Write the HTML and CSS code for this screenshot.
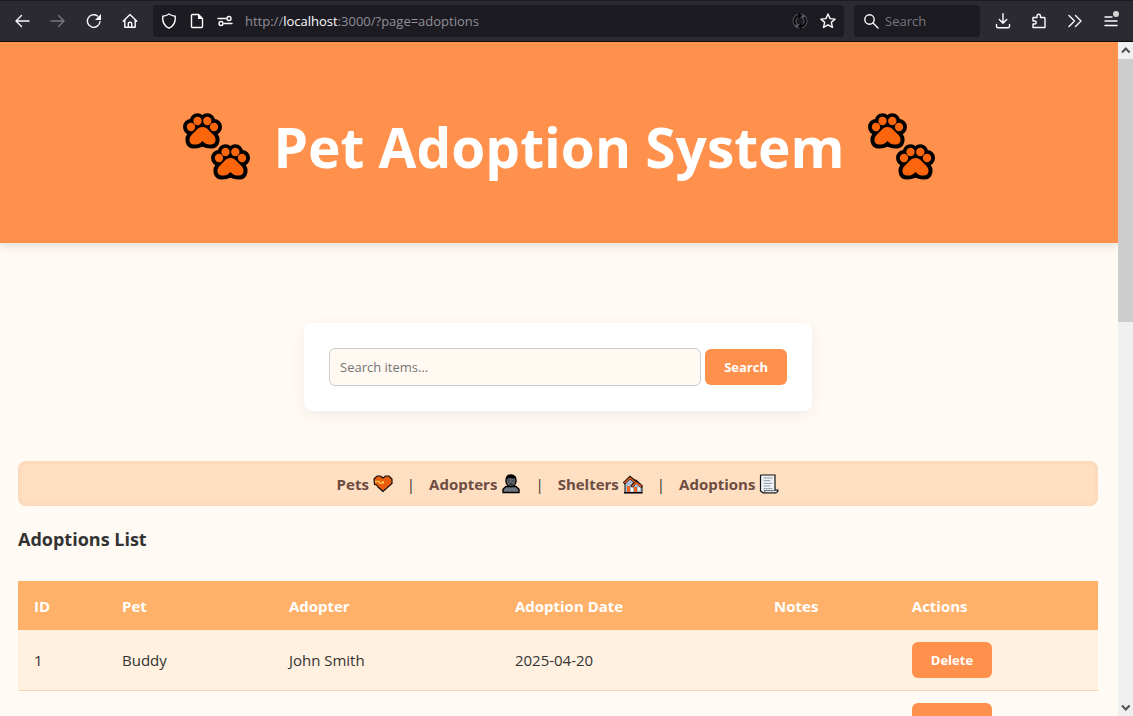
FILE: index.html
```
<!DOCTYPE html>
<html lang="en">
<head>
<meta charset="utf-8">
<title>Pet Adoption System</title>
<link rel="stylesheet" href="styles.css">
</head>
<body>
<svg class="defs" aria-hidden="true">
  <symbol id="paw" viewBox="0 0 39 36">
    <g fill="#000" stroke="#000" stroke-width="8" stroke-linejoin="round">
      <circle cx="14.5" cy="8" r="3.8"/><circle cx="24.3" cy="8" r="3.8"/>
      <circle cx="8" cy="14" r="4"/><circle cx="31" cy="14" r="4"/>
      <path d="M19.500 14C14.500 14 12 19 8.500 22C5 25.500 6 31.500 11 31.500C14.500 31.500 17 31 19.500 28.500C22 31 24.500 31.500 28 31.500C33 31.500 34 25.500 30.500 22C27 19 24.500 14 19.500 14Z"/>
    </g>
    <g fill="#fb650c">
      <circle cx="14.500" cy="8" r="4.200"/><circle cx="24.300" cy="8" r="4.200"/>
      <circle cx="8" cy="14" r="4.200"/><circle cx="31" cy="14" r="4.200"/>
      <path d="M19.500 14C14.500 14 12 19 8.500 22C5 25.500 6 31.500 11 31.500C14.500 31.500 17 31 19.500 28C22 31 24.500 31.500 28 31.500C33 31.500 34 25.500 30.500 22C27 19 24.500 14 19.500 14Z"/>
    </g>
  </symbol>
  <symbol id="paws" viewBox="0 0 67 67">
    <use href="#paw" x="0" y="0" width="39" height="36"/>
    <use href="#paw" x="28" y="31" width="39" height="36"/>
  </symbol>
</svg>

<div class="toolbar">
  <button class="tool" aria-label="Back"><svg class="icon" viewBox="0 0 16 16"><path d="M15 8H2M7.500 2.500 2 8l5.500 5.500"/></svg></button>
  <button class="tool tool-off" aria-label="Forward"><svg class="icon" viewBox="0 0 16 16"><path d="M1 8h13M8.500 2.500 14 8l-5.500 5.500"/></svg></button>
  <button class="tool" aria-label="Reload"><svg class="icon" viewBox="0 0 16 16"><path d="M14 8.500A6.300 6.300 0 1 1 11.500 3"/><path class="solid" d="M15 1v6H9z"/></svg></button>
  <button class="tool" aria-label="Home"><svg class="icon" viewBox="0 0 16 16"><path d="M1.200 8.300 8 1.500l6.800 6.800M2.800 7v7.300h10.400V7M6.300 14V10.500q0-1.300 1.700-1.300t1.700 1.300V14"/></svg></button>

  <div class="address">
    <svg class="icon" viewBox="0 0 16 16"><path d="M8 1C6 2.500 4 3 1.700 3.200C1.300 9 3 13 8 15.200C13 13 14.700 9 14.300 3.200C12 3 10 2.500 8 1Z"/></svg>
    <svg class="icon" viewBox="0 0 16 16"><path d="M3.500 1.500h6l4 4v8q0 1-1 1h-9q-1 0-1-1v-11q0-1 1-1Z"/><path class="solid" d="M9 1v5h5z"/></svg>
    <svg class="icon" viewBox="0 0 16 16"><path d="M1 5.500h8M7 10.500h8"/><circle cx="12" cy="5.500" r="2"/><circle cx="4" cy="10.500" r="2"/></svg>
    <span class="url">http://<b>localhost</b>:3000/?page=adoptions</span>
    <svg class="icon icon-dim" viewBox="0 0 16 16"><circle class="ring" cx="8" cy="8" r="5.500"/><path d="M3.500 11.200A5.500 5.500 0 0 1 8 2.500M7 .8 9 2.500 7 4.200M12.500 4.800A5.500 5.500 0 0 1 8 13.500M9 11.800 7 13.500l2 1.700"/></svg>
    <svg class="icon" viewBox="0 0 16 16"><path d="m8 1 2.100 4.600 5 .5-3.800 3.300 1.200 5L8 11.800l-4.500 2.600 1.200-5L.9 6.100l5-.5Z"/></svg>
  </div>

  <label class="quick">
    <svg class="icon" viewBox="0 0 16 16"><circle cx="6.500" cy="6.500" r="4.700"/><path d="m10 10 5 5"/></svg>
    <input class="quick-input" type="text" placeholder="Search" aria-label="Search the web">
  </label>

  <button class="tool" aria-label="Downloads"><svg class="icon" viewBox="0 0 16 16"><path d="M8 .8V10M4.300 6.500 8 10.200l3.700-3.700M1.500 11.500v1.700q0 1.500 1.500 1.500h10q1.500 0 1.500-1.500v-1.700"/></svg></button>
  <button class="tool" aria-label="Extensions"><svg class="icon" viewBox="0 0 16 16"><path d="M2 4.500h4V3q0-1.800 1.700-1.800T9.500 3v1.500h3.700q.8 0 .8.800v9.200H2V11h1.700q1.500 0 1.500-1.500T3.700 8H2Z"/></svg></button>
  <button class="tool" aria-label="More tools"><svg class="icon" viewBox="0 0 16 16"><path d="m2 2.500 5.500 5.500L2 13.500M8.500 2.500 14 8l-5.500 5.500"/></svg></button>
  <button class="tool menu" aria-label="Menu"><svg class="icon" viewBox="0 0 16 16"><path d="M2 4h7M2 8h12M2 12.500h12"/></svg><span class="dot"></span></button>
</div>

<div class="viewport">
  <div class="page">
    <header class="banner">
      <svg class="paws"><use href="#paws"/></svg>
      <h1 class="title">Pet Adoption System</h1>
      <svg class="paws"><use href="#paws"/></svg>
    </header>

    <main class="content">
      <form class="search">
        <input class="search-input" type="text" placeholder="Search items..." aria-label="Search items">
        <button class="button" type="button">Search</button>
      </form>

      <nav class="nav">
        <a class="nav-link" href="#pets">Pets
          <svg class="emoji" viewBox="0 0 20 20"><path d="M10 17.500 5 13 3.500 11 1.500 10.500 1 5 4 2h3.500L10 4l2.500-2H16l3 3v4.500Z" fill="#ea5b0c" stroke="#111" stroke-width="1.200"/><path d="M2 7.500h5M6 9h5M10 7v2" fill="none" stroke="#ffc04d" stroke-width="1.700"/></svg></a>
        <span class="bar">|</span>
        <a class="nav-link" href="#adopters">Adopters
          <svg class="emoji" viewBox="0 0 20 20"><path d="M2 18.500v-3.300L5 12.500h10l3 2.700v3.300Z" fill="#6b7480" stroke="#000" stroke-width="1.400"/><path d="M10 1C6 1 5 4 5 7s2 5.500 5 5.500 5-2.500 5-5.500-1-6-5-6Z" fill="#5d636c" stroke="#000" stroke-width="1.400"/><path d="M5.500 5.500 8 4l4 .5 2.500-.5V2.500L10 1 6 2.500Z"/><path d="M7.500 7h1M11.500 7h1M8.500 10h3" stroke="#111"/></svg></a>
        <span class="bar">|</span>
        <a class="nav-link" href="#shelters">Shelters
          <svg class="emoji" viewBox="0 0 20 20"><path d="M2 9v9.500h17V12L13 7 7 4Z" fill="#a8bed0" stroke="#111"/><path d="M.8 9.500 7 3.500 12.500 8M8.500 13 13 7.500l6.200 5.500" fill="none" stroke="#111" stroke-width="3"/><path d="M1.500 9 7 4l5 4M9 12.500 13 8.500l5.500 4" fill="none" stroke="#ee5c18" stroke-width="1.600"/><path d="M4 12h3v6H4ZM11 13h3v5h-3Z" fill="#f4641c"/><path d="M8 13.500h2v4H8ZM15 13.500h2v3h-2Z" fill="#fff"/><path d="M1 18.800h18.500" stroke="#000" stroke-width="1.500"/></svg></a>
        <span class="bar">|</span>
        <a class="nav-link" href="#adoptions">Adoptions
          <svg class="emoji" viewBox="0 0 20 20"><path d="M2 1h14v15h2.800v1.500L17 18.800H4L1.500 17V1.500Z" fill="#f0f3f5" stroke="#111" stroke-width="1.200"/><path d="M4.500 4h9M4.500 6.700h7M4.500 9.400h9M4.500 12h7M4.500 14.700h9" stroke="#8b9aa8"/><path d="M5 16.500h13v2H6Z" fill="#d8dfe4" stroke="#333" stroke-width=".6"/></svg></a>
      </nav>

      <h2 class="heading">Adoptions List</h2>

      <table class="table">
        <colgroup><col class="c-id"><col class="c-pet"><col class="c-adopter"><col class="c-date"><col class="c-notes"><col></colgroup>
        <thead>
          <tr><th>ID</th><th>Pet</th><th>Adopter</th><th>Adoption Date</th><th>Notes</th><th>Actions</th></tr>
        </thead>
        <tbody>
          <tr><td>1</td><td>Buddy</td><td>John Smith</td><td>2025-04-20</td><td></td><td><button class="button">Delete</button></td></tr>
          <tr><td></td><td></td><td></td><td></td><td></td><td><button class="button" aria-label="Delete"></button></td></tr>
        </tbody>
      </table>
    </main>
  </div>

  <div class="scroll" aria-hidden="true">
    <svg class="arrow" viewBox="0 0 15 17"><path d="m4 10.500 3.800-4 3.800 4"/></svg>
    <div class="thumb"></div>
    <svg class="arrow" viewBox="0 0 15 17"><path d="m4 6.500 3.800 4 3.800-4"/></svg>
  </div>
</div>
</body>
</html>
```
FILE: styles.css
```
* { box-sizing: border-box; }

body {
  margin: 0;
  height: 100vh;
  display: flex;
  flex-direction: column;
  overflow: hidden;
  background: #fffaf3;
  color: #333;
  font-family: "Segoe UI", "Open Sans", "Noto Sans", sans-serif;
  font-size: 15px;
}

button, input { font-family: inherit; }
.defs { position: absolute; width: 0; height: 0; }

/* Browser toolbar */
.toolbar {
  flex: none;
  display: flex;
  align-items: center;
  height: 42px;
  padding: 0 4px;
  background: #2b2a33;
  border-top: 1px solid #1c1b22;
  border-bottom: 1px solid #0c0c0d;
}
.tool {
  flex: none;
  display: flex;
  align-items: center;
  justify-content: center;
  width: 36px;
  height: 32px;
  padding: 0;
  border: 0;
  background: none;
  color: #fbfbfe;
}
.tool-off { color: #77767e; }
.icon {
  flex: none;
  width: 16px;
  height: 16px;
  fill: none;
  stroke: currentColor;
  stroke-width: 1.4;
  stroke-linecap: round;
  stroke-linejoin: round;
}
.icon .solid { fill: currentColor; stroke: none; }
.icon-dim { color: #08080a; }
.icon-dim .ring { stroke: #5b5a63; stroke-width: 4; }
.icon-dim path { stroke-width: 2; }
.address, .quick {
  display: flex;
  align-items: center;
  height: 32px;
  background: #1c1b22;
  border-radius: 4px;
  color: #fbfbfe;
}
.address {
  flex: 1;
  gap: 12px;
  margin: 0 10px 0 5px;
  padding: 0 8px;
}
.url {
  flex: 1;
  font-size: 13px;
  color: #918f97;
}
.url b { font-weight: 400; color: #fbfbfe; }
.quick {
  width: 126px;
  gap: 6px;
  margin-right: 5px;
  padding: 0 9px;
}
.quick-input {
  flex: 1;
  min-width: 0;
  padding: 0;
  border: 0;
  background: none;
  color: #fbfbfe;
  font-size: 13px;
}
.quick-input::placeholder { color: #77767e; opacity: 1; }
.menu { position: relative; }
.dot {
  position: absolute;
  top: 6px;
  right: 10px;
  width: 6px;
  height: 6px;
  border-radius: 50%;
  background: #d8d4d4;
}

/* Page area and scrollbar */
.viewport { flex: 1; display: flex; min-height: 0; }
.page { flex: 1; min-width: 0; overflow: hidden; }
.scroll {
  flex: none;
  display: flex;
  flex-direction: column;
  width: 15px;
  background: #f0f0f0;
}
.thumb { height: 39%; margin-bottom: auto; background: #cdcdcd; }
.arrow {
  flex: none;
  width: 15px;
  height: 17px;
  fill: none;
  stroke: #505050;
  stroke-width: 2;
}

.banner {
  display: flex;
  align-items: center;
  justify-content: center;
  gap: 23px;
  padding: 64px 20px 56px;
  background: #ff914d;
  color: #fff;
  box-shadow: 0 4px 8px rgba(0, 0, 0, 0.1);
}
.title { margin: 0; font-size: 55px; line-height: 81px; white-space: nowrap; }
.paws { width: 67px; height: 67px; }

.content { padding: 80px 20px 0 18px; }
.search {
  display: flex;
  align-items: center;
  gap: 4px;
  width: 508px;
  max-width: 100%;
  margin: 0 auto 50px;
  padding: 25px;
  background: #fff;
  border-radius: 8px;
  box-shadow: 0 4px 16px rgba(0, 0, 0, 0.06);
}
.search-input {
  flex: 1;
  min-width: 0;
  height: 38px;
  padding: 0 10px;
  border: 1px solid #ccc;
  border-radius: 6px;
  background: #fff9f2;
  font-size: 13px;
}
.search-input::placeholder { color: #757575; }
.button {
  display: block;
  height: 36px;
  min-width: 80px;
  padding: 0 19px;
  border: 0;
  border-radius: 6px;
  background: #ff914d;
  color: #fff;
  font-size: 13px;
  font-weight: 700;
}

.nav {
  display: flex;
  align-items: center;
  justify-content: center;
  gap: 14px;
  height: 45px;
  background: #ffdfc1;
  border-radius: 8px;
  box-shadow: inset 0 0 5px rgba(160, 90, 30, 0.1);
}
.nav-link {
  display: flex;
  align-items: center;
  gap: 4px;
  color: #6d4c41;
  font-weight: 700;
  text-decoration: none;
}
.emoji { width: 20px; height: 20px; }

.heading { margin: 20px 0 28px; font-size: 18px; line-height: 27px; }

.table {
  width: 100%;
  table-layout: fixed;
  border-collapse: collapse;
}
.c-id { width: 8.15%; }
.c-pet { width: 15.45%; }
.c-adopter { width: 20.93%; }
.c-date { width: 24%; }
.c-notes { width: 12.75%; }
.table th {
  height: 49px;
  padding: 0 16px;
  background: #ffb169;
  color: #fff;
  text-align: left;
}
.table td {
  padding: 12px 16px;
  border-bottom: 1px solid #f9d5b5;
}
.table tbody tr:nth-child(odd) { background: #fff0df; }
```
